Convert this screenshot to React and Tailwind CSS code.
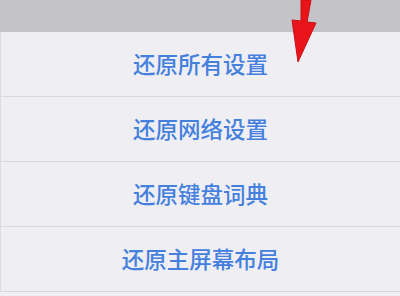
import React from "react";

const items = ["还原所有设置", "还原网络设置", "还原键盘词典", "还原主屏幕布局"];

const App = () => {
  return (
    <div
      className="relative w-[400px] h-[296px] overflow-hidden bg-[#efeff3]"
      style={{ fontFamily: '"Noto Sans CJK SC", "Noto Sans", sans-serif' }}
    >
      <div className="h-[32px] bg-[#c4c3c8]" />
      <div className="flex flex-col border-l border-[#dcdce0]">
        {items.map((label) => (
          <div
            key={label}
            className="h-[65px] flex items-center justify-center border-b border-[#d9d9dd] shrink-0"
          >
            <span className="text-[22.5px] font-medium leading-none text-[#4580de] -mt-[1px]">
              {label}
            </span>
          </div>
        ))}
      </div>

      {/* red annotation arrow */}
      <svg
        className="absolute left-[286px] top-0"
        width="36"
        height="66"
        viewBox="0 0 36 66"
      >
        <path
          d="M15 0 L25 0 L21 22 L30 23 L12 62 L6 20 L15 21 Z"
          fill="#e8141a"
          stroke="#c80f14"
          strokeWidth="1"
          strokeLinejoin="round"
        />
      </svg>
    </div>
  );
};

export default App;
